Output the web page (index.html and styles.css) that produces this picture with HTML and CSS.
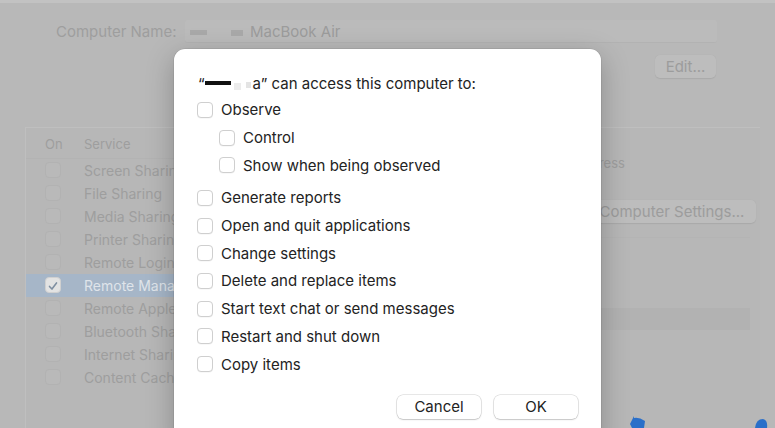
FILE: index.html
```html
<!DOCTYPE html>
<html lang="en">
<head>
<meta charset="utf-8">
<title>Remote Management Options</title>
<link rel="stylesheet" href="styles.css">
</head>
<body>
<div class="window">
  <div class="topline"></div>
  <div class="name-row">
    <span class="name-label">Computer Name:</span>
    <div class="name-field"><span class="blur b1"></span><span class="blur b2"></span><span class="mac">MacBook Air</span></div>
  </div>
  <div class="edit-row"><span class="bg-btn edit">Edit...</span></div>

  <div class="list-panel">
    <div class="table">
      <div class="thead"><span class="col-on">On</span><span class="col-svc">Service</span></div>
      <div class="trow"><span class="bg-check"></span><span>Screen Sharing</span></div>
      <div class="trow"><span class="bg-check"></span><span>File Sharing</span></div>
      <div class="trow"><span class="bg-check"></span><span>Media Sharing</span></div>
      <div class="trow"><span class="bg-check"></span><span>Printer Sharing</span></div>
      <div class="trow"><span class="bg-check"></span><span>Remote Login</span></div>
      <div class="trow selected"><span class="bg-check on"><svg viewBox="0 0 16 16" width="16" height="16"><path d="M4 8.5l2.8 3L12 4.5" fill="none" stroke="#7f8fa1" stroke-width="1.8" stroke-linecap="round" stroke-linejoin="round"/></svg></span><span>Remote Management</span></div>
      <div class="trow"><span class="bg-check"></span><span>Remote Apple Events</span></div>
      <div class="trow"><span class="bg-check"></span><span>Bluetooth Sharing</span></div>
      <div class="trow"><span class="bg-check"></span><span>Internet Sharing</span></div>
      <div class="trow"><span class="bg-check"></span><span>Content Caching</span></div>
    </div>
    <div class="side">
      <div class="addr">Address</div>
      <span class="bg-btn settings">Computer Settings...</span>
      <div class="side-box">
        <div class="side-band"></div>
      </div>
    </div>
  </div>

  <svg class="logo" width="160" height="12" viewBox="0 0 160 12">
    <path d="M12 0 L8 8 L10 12 L22 12 L23 5 Q17 1 12 2 Z" fill="#2a6fc9"/>
    <path d="M133 12 Q134 3 141 3 Q146 4 145 12 Z" fill="#2a6fc9"/>
  </svg>

  <div class="dialog">
    <div class="d-title"><span class="q">“</span><span class="redact"></span><span class="ghost g1"></span><span class="ghost g2"></span><span class="q">a” can access this computer to:</span></div>
    <label class="opt"><span class="box"></span>Observe</label>
    <label class="opt sub"><span class="box"></span>Control</label>
    <label class="opt sub"><span class="box"></span>Show when being observed</label>
    <label class="opt gap"><span class="box"></span>Generate reports</label>
    <label class="opt"><span class="box"></span>Open and quit applications</label>
    <label class="opt"><span class="box"></span>Change settings</label>
    <label class="opt"><span class="box"></span>Delete and replace items</label>
    <label class="opt"><span class="box"></span>Start text chat or send messages</label>
    <label class="opt"><span class="box"></span>Restart and shut down</label>
    <label class="opt"><span class="box"></span>Copy items</label>
    <div class="actions">
      <button class="btn">Cancel</button>
      <button class="btn">OK</button>
    </div>
  </div>
</div>
</body>
</html>
```
FILE: styles.css
```css
* { box-sizing: border-box; }
html, body { margin: 0; padding: 0; }
body {
  font-family: Inter, "Noto Sans", "Liberation Sans", sans-serif;
  font-size: 14px;
  background: #b8b8b8;
}
.window {
  position: relative;
  width: 775px;
  height: 428px;
  overflow: hidden;
  background: #b8b8b8;
  color: #9e9e9e;
}
.topline { height: 3px; background: #c2c2c2; }

.name-row {
  display: flex;
  align-items: center;
  margin-top: 17px;
  padding-left: 56px;
  height: 23px;
  font-size: 15px;
}
.name-label { width: 129px; }
.name-field {
  width: 532px;
  height: 23px;
  display: flex;
  align-items: center;
  padding-left: 5px;
  background: #bbbbbb;
  border-bottom: 1px solid #b2b2b2;
  border-radius: 3px;
}
.blur { display: inline-block; height: 5px; background: #a9a9a9; }
.b1 { width: 17px; margin-right: 24px; margin-top: 3px; }
.b2 { width: 12px; margin-right: 7px; height: 6px; margin-top: 4px; }
.mac { color: #9c9c9c; }

.edit-row {
  display: flex;
  justify-content: flex-end;
  padding-right: 59px;
  margin-top: 12px;
}
.bg-btn {
  display: inline-flex;
  align-items: center;
  justify-content: center;
  height: 23px;
  border-radius: 5px;
  background: #bdbdbd;
  box-shadow: 0 0.5px 1px rgba(0,0,0,0.08);
  color: #9c9c9c;
  font-size: 15px;
}
.edit { width: 61px; }

.list-panel {
  margin-top: 49px;
  margin-left: 25px;
  width: 735px;
  height: 320px;
  display: flex;
  border-left: 1px solid #bfbfbf;
  border-top: 1px solid #bfbfbf;
  background: #b7b7b7;
}
.table { flex: 1; padding-top: 3px; }
.thead {
  display: flex;
  align-items: center;
  height: 27.5px;
  border-bottom: 1px solid #b3b3b3;
  font-size: 13px;
}
.col-on { width: 58px; padding-left: 19px; }
.trow {
  display: flex;
  align-items: center;
  height: 23px;
  padding-left: 19px;
}
.trow span:last-child { margin-left: 23px; }
.bg-check {
  width: 16px;
  height: 16px;
  border-radius: 4px;
  border: 1px solid #b2b2b2;
  background: #b9b9b9;
  display: inline-flex;
}
.bg-check.on { background: #e3e3e3; border-color: #d0d0d0; }
.selected { background: #a6b6c8; color: #dfe4ea; }

.side {
  width: 170px;
  padding-top: 28px;
  display: flex;
  flex-direction: column;
}
.addr { height: 15px; line-height: 15px; font-size: 13px; margin-left: -16px; }
.settings { width: 168px; margin-top: 29px; margin-left: -2px; }
.side-box {
  margin-top: 14px;
  border-top: 1px solid #b4b4b4;
  height: 160px;
  margin-right: 10px;
}
.side-band { margin-top: 70px; height: 22px; background: #b2b2b2; }

.logo { position: absolute; left: 622px; top: 416px; }

.dialog {
  position: absolute;
  left: 174px;
  top: 49px;
  width: 427px;
  height: 400px;
  background: #ffffff;
  border-radius: 11px;
  box-shadow: 0 0 0 0.5px rgba(0,0,0,0.12), 0 8px 28px rgba(0,0,0,0.25);
  padding: 24px 23px 0 24px;
  color: #232323;
  font-size: 15px;
  display: flex;
  flex-direction: column;
}
.d-title {
  height: 20px;
  display: flex;
  align-items: center;
  margin-bottom: 3px;
  white-space: pre;
}
.redact { display: inline-block; width: 26px; height: 4px; background: #111; }
.ghost { display: inline-block; background: #ececec; }
.g1 { width: 7px; height: 7px; margin: 6px 0 0 3px; }
.g2 { width: 5px; height: 6px; margin: 3px 2px 0 5px; background: #e4e4e4; }
.opt {
  display: flex;
  align-items: center;
  height: 27.7px;
  margin-left: -1px;
}
.opt.sub { margin-left: 21px; }
.opt.gap { margin-top: 5px; }
.box {
  width: 16px;
  height: 16px;
  border: 1px solid #cfcfcf;
  border-radius: 4px;
  background: #fff;
  box-shadow: 0 0.5px 0.5px rgba(0,0,0,0.06);
  margin-right: 8px;
  flex: none;
}
.actions {
  display: flex;
  justify-content: flex-end;
  gap: 13px;
  margin-top: 17px;
}
.btn {
  width: 84px;
  height: 24px;
  border: none;
  border-radius: 6px;
  background: #ffffff;
  box-shadow: 0 0 0 0.5px rgba(0,0,0,0.18), 0 1px 1.5px rgba(0,0,0,0.15);
  font-family: inherit;
  font-size: 15px;
  color: #232323;
  padding: 0;
}
```
